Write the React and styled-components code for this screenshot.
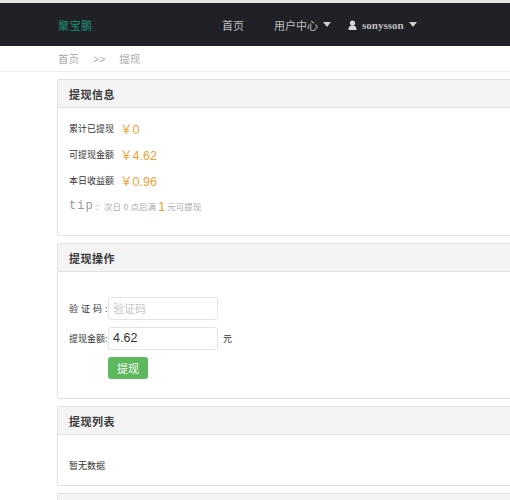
import React from 'react'
import styled, { createGlobalStyle } from 'styled-components'

const Global = createGlobalStyle`
  html, body {
    margin: 0;
    padding: 0;
    overflow: hidden;
    background: #fff;
  }
  body {
    font-family: "Liberation Sans", "Noto Sans CJK SC", sans-serif;
    color: #333;
    border-top: 3px solid #e6e6e6;
  }
`

const Navbar = styled.div`
  height: 43px;
  background: #1f2127;
  display: flex;
  align-items: center;
  padding-left: 58px;
  box-sizing: border-box;
`

const Logo = styled.div`
  color: #1b8f74;
  font-size: 11px;
  width: 164px;
  letter-spacing: 0.5px;
`

const NavItem = styled.div`
  color: #bdbdbd;
  font-size: 11px;
  display: flex;
  align-items: center;
  gap: 5px;
  margin-right: ${p => p.$gap || 30}px;
  font-family: ${p => (p.$latin ? '"Liberation Serif", "Noto Sans CJK SC", serif' : 'inherit')};
  font-weight: ${p => (p.$latin ? 'bold' : 'normal')};
`

const Caret = styled.span`
  width: 0;
  height: 0;
  border-left: 4px solid transparent;
  border-right: 4px solid transparent;
  border-top: 5px solid #cfcfcf;
`

const Breadcrumb = styled.div`
  height: 25px;
  border-bottom: 1px solid #eee;
  display: flex;
  align-items: center;
  gap: 14px;
  padding-left: 58px;
  font-size: 10.5px;
  color: #aaa;
`

const Main = styled.div`
  padding: 7px 0 0 57px;
  width: 700px;
  display: flex;
  flex-direction: column;
  gap: 7px;
`

const Panel = styled.div`
  border: 1px solid #e2e2e2;
  border-radius: 2px;
  background: #fff;
`

const PanelHead = styled.div`
  height: 27px;
  background: #f4f4f4;
  border-bottom: 1px solid #e2e2e2;
  display: flex;
  align-items: center;
  padding-left: 11px;
  font-size: 11px;
  font-weight: bold;
  color: #3a3a3a;
  letter-spacing: 0.5px;
`

const PanelBody = styled.div`
  height: ${p => p.$h}px;
  padding: ${p => p.$pad || '0 11px'};
  box-sizing: border-box;
  display: flex;
  flex-direction: column;
`

const InfoRow = styled.div`
  height: 26px;
  display: flex;
  align-items: center;
  gap: 6px;
  font-size: 9px;
  color: #333;
`

const Money = styled.span`
  color: #eea236;
  font-size: 12.5px;
`

const Tip = styled.div`
  height: 26px;
  display: flex;
  align-items: center;
  font-size: 8.5px;
  color: #aaa;
  gap: 2px;
`

const TipWord = styled.span`
  font-family: "Liberation Mono", monospace;
  font-size: 12px;
  letter-spacing: 1px;
  color: #999;
`

const One = styled.span`
  color: #eea236;
  font-size: 13px;
`

const FormRow = styled.div`
  display: flex;
  align-items: center;
  gap: 2px;
  height: 24px;
  margin-bottom: ${p => p.$mb || 6}px;
  font-size: 9px;
`

const Label = styled.span`
  width: 37px;
  letter-spacing: ${p => p.$spaced ? '3px' : '0'};
  white-space: nowrap;
`

const Input = styled.div`
  width: 110px;
  height: 23px;
  border: 1px solid #e4e4e4;
  border-radius: 3px;
  box-sizing: border-box;
  display: flex;
  align-items: center;
  padding-left: 4px;
  font-size: ${p => (p.$placeholder ? '11px' : '12.5px')};
  color: ${p => (p.$placeholder ? '#c4c4c4' : '#333')};
  margin-right: 3px;
`

const Button = styled.div`
  margin-left: 39px;
  width: 40px;
  height: 22px;
  border-radius: 3px;
  background: #5cb85c;
  color: #fff;
  font-size: 11px;
  display: flex;
  align-items: center;
  justify-content: center;
`

const Empty = styled.div`
  font-size: 9px;
  color: #333;
`

const UserIcon = () => (
  <svg width="9" height="10" viewBox="0 0 9 10">
    <circle cx="4.5" cy="3" r="2.6" fill="#d8d8d8" />
    <path d="M0.5 10 C0.5 6.5 2 5.6 4.5 5.6 C7 5.6 8.5 6.5 8.5 10 Z" fill="#d8d8d8" />
  </svg>
)

export default function App() {
  return (
    <>
      <Global />
      <Navbar>
        <Logo>聚宝鹏</Logo>
        <NavItem>首页</NavItem>
        <NavItem $gap={17}>用户中心 <Caret /></NavItem>
        <NavItem $latin><UserIcon />sonysson <Caret /></NavItem>
      </Navbar>
      <Breadcrumb>
        <span>首页</span>
        <span>&gt;&gt;</span>
        <span>提现</span>
      </Breadcrumb>
      <Main>
        <Panel>
          <PanelHead>提现信息</PanelHead>
          <PanelBody $h={127} $pad="7px 11px 0">
            <InfoRow>累计已提现 <Money>￥0</Money></InfoRow>
            <InfoRow>可提现金额 <Money>￥4.62</Money></InfoRow>
            <InfoRow>本日收益额 <Money>￥0.96</Money></InfoRow>
            <Tip><TipWord>tip</TipWord>：次日 0 点后满 <One>1</One> 元可提现</Tip>
          </PanelBody>
        </Panel>
        <Panel>
          <PanelHead>提现操作</PanelHead>
          <PanelBody $h={126} $pad="24px 11px 0">
            <FormRow>
              <Label $spaced>验证码:</Label>
              <Input $placeholder>验证码</Input>
            </FormRow>
            <FormRow $mb={7}>
              <Label>提现金额:</Label>
              <Input>4.62</Input>
              元
            </FormRow>
            <Button>提现</Button>
          </PanelBody>
        </Panel>
        <Panel>
          <PanelHead>提现列表</PanelHead>
          <PanelBody $h={50} $pad="24px 11px 0">
            <Empty>暂无数据</Empty>
          </PanelBody>
        </Panel>
        <Panel>
          <PanelHead />
        </Panel>
      </Main>
    </>
  )
}
